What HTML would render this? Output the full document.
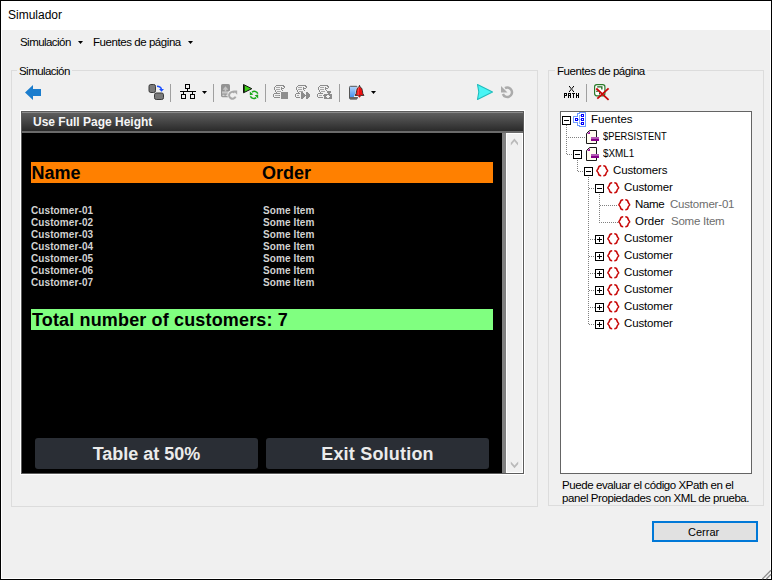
<!DOCTYPE html>
<html><head><meta charset="utf-8">
<style>
*{box-sizing:border-box;margin:0;padding:0}
html,body{width:772px;height:580px;overflow:hidden;background:#fff}
body{position:relative;font-family:"Liberation Sans",sans-serif;font-size:11px;color:#000}
.a{position:absolute;white-space:nowrap;line-height:1}
#win{position:absolute;left:0;top:0;width:772px;height:580px;border:1px solid #000;background:#fff}
#cl{position:absolute;left:2px;top:30px;width:768px;height:548px;background:#f0f0f0}
.gb{position:absolute;border:1px solid #dcdcdc}
.lbl{background:#f0f0f0;padding:0 2px}
.sep{position:absolute;width:1px;background:#a0a0a0}
.tb{position:absolute}
.blk{color:#d2d2d2;font-weight:bold;font-size:10px;letter-spacing:0.1px}
.big{font-weight:bold;font-size:18px}
.btn{position:absolute;top:438px;height:31px;background:#2a2e35;border-radius:3px;color:#ebebeb;font-weight:bold;font-size:18px;text-align:center;line-height:31px;padding-top:1px}
.tt{font-size:11.5px;letter-spacing:-0.15px}
.gv{color:#6d6d6d}
</style></head>
<body>
<div id="win"></div>
<div id="cl"></div>

<!-- title -->
<div class="a" style="left:8px;top:9px;font-size:12px">Simulador</div>

<!-- menu -->
<div class="a" style="left:20px;top:37px;font-size:11.5px;letter-spacing:-0.55px">Simulación</div>
<svg class="a" style="left:78px;top:41px" width="5" height="3"><path d="M0 0H5L2.5 3Z" fill="#000"/></svg>
<div class="a" style="left:93px;top:37px;font-size:11.5px;letter-spacing:-0.44px">Fuentes de página</div>
<svg class="a" style="left:188px;top:41px" width="5" height="3"><path d="M0 0H5L2.5 3Z" fill="#000"/></svg>

<!-- group boxes -->
<div class="gb" style="left:11px;top:70px;width:527px;height:437px"></div>
<div class="gb" style="left:548px;top:70px;width:216px;height:436px"></div>
<div class="a lbl" style="left:17px;top:66px;font-size:11.5px;letter-spacing:-0.55px">Simulación</div>
<div class="a lbl" style="left:555px;top:66px;font-size:11.5px;letter-spacing:-0.44px">Fuentes de página</div>

<!-- toolbar left -->
<svg class="a" style="left:0;top:0" width="772" height="110">
  <!-- back arrow -->
  <path d="M25 92.5L33 85V89H41V96H33V100Z" fill="#1b7dcd"/>
  <!-- swap icon -->
  <rect x="149" y="84.5" width="6.5" height="8" rx="1.8" fill="#7a7a7a" stroke="#3a3a3a"/>
  <rect x="154.5" y="93" width="9" height="6.5" rx="1.8" fill="#7a7a7a" stroke="#3a3a3a"/>
  <path d="M157 86.3Q160.8 86.3 161.5 89.5" fill="none" stroke="#1a4fff" stroke-width="1.4"/>
  <path d="M159 89H164L161.5 91.8Z" fill="#1a4fff"/>
  <!-- separators -->
  <rect x="170" y="84" width="1" height="18" fill="#a0a0a0"/>
  <rect x="213" y="84" width="1" height="18" fill="#a0a0a0"/>
  <rect x="265" y="84" width="1" height="18" fill="#a0a0a0"/>
  <rect x="339" y="84" width="1" height="18" fill="#a0a0a0"/>
  <!-- hierarchy -->
  <g fill="none" stroke="#000" shape-rendering="crispEdges">
    <rect x="185.5" y="84.5" width="4" height="4"/>
    <rect x="181.5" y="94.5" width="4" height="4"/>
    <rect x="190.5" y="94.5" width="4" height="4"/>
    <path d="M187.5 88.5V91.5M180 91.5H196M183.5 91.5V94.5M192.5 91.5V94.5"/>
  </g>
  <path d="M202 91H207L204.5 94Z" fill="#000"/>
  <!-- gray doc refresh -->
  <rect x="221" y="84" width="9" height="13.2" rx="1.6" fill="#939393"/>
  <path d="M222.6 89.8L225.5 86.2L228.4 89.8H226.3V91.4H224.7V89.8Z" fill="#c2c2c2"/>
  <rect x="222" y="91.4" width="7" height="2.2" fill="#c6c6c6"/>
  <rect x="222.4" y="94.6" width="2.2" height="1.5" fill="#d4d4d4"/><rect x="225.6" y="94.6" width="2.2" height="1.5" fill="#d4d4d4"/>
  <circle cx="232.3" cy="95" r="5" fill="#f0f0f0"/>
  <path d="M235.6 96.6A3.4 3.4 0 1 1 234.6 92.6" fill="none" stroke="#a9a9a9" stroke-width="2"/>
  <path d="M233 90.6H237.2V94.8Z" fill="#a9a9a9"/>
  <!-- green play sync -->
  <path d="M243.5 84.5L251.8 88.7L243.5 92.8Z" fill="#3cd016" stroke="#111" stroke-width="1" stroke-linejoin="round"/>
  <path d="M244 85.5V92" stroke="#111" stroke-width="1.4"/>
  <g fill="none" stroke="#18a818" stroke-width="1.5">
    <path d="M257.8 93.6A3.7 3.7 0 0 0 252 92.2"/>
    <path d="M250.4 96.2A3.7 3.7 0 0 0 256.2 97.6"/>
  </g>
  <path d="M249.8 91.4L253.4 94.6L249.8 95.2Z" fill="#18a818"/>
  <path d="M258.2 98.4L254.6 95.2L258.2 94.6Z" fill="#18a818"/>
  <!-- scroll icons -->
  <g fill="#8c8c8c" shape-rendering="crispEdges"><rect x="276" y="85" width="8" height="1"/><rect x="275" y="86" width="1" height="1"/><rect x="283" y="86" width="2" height="1"/><rect x="274" y="87" width="1" height="1"/><rect x="281" y="87" width="1" height="1"/><rect x="284" y="87" width="1" height="1"/><rect x="274" y="88" width="1" height="1"/><rect x="281" y="88" width="3" height="1"/><rect x="274" y="89" width="1" height="1"/><rect x="281" y="89" width="1" height="1"/><rect x="275" y="90" width="1" height="1"/><rect x="282" y="90" width="1" height="1"/><rect x="275" y="91" width="1" height="1"/><rect x="276" y="92" width="1" height="1"/><rect x="274" y="93" width="6" height="1"/><rect x="273" y="94" width="1" height="1"/><rect x="273" y="95" width="1" height="1"/><rect x="279" y="95" width="1" height="1"/><rect x="273" y="96" width="1" height="1"/><rect x="274" y="97" width="6" height="1"/></g>
  <g fill="#a8a8a8" shape-rendering="crispEdges"><rect x="276" y="87" width="4" height="1"/><rect x="276" y="89" width="4" height="1"/><rect x="277" y="91" width="4" height="1"/><rect x="275" y="95" width="4" height="1"/></g>
  <g fill="#8e8e8e" shape-rendering="crispEdges"><rect x="281" y="92" width="7" height="1"/><rect x="281" y="93" width="7" height="1"/><rect x="281" y="94" width="7" height="1"/><rect x="281" y="95" width="7" height="1"/><rect x="281" y="96" width="7" height="1"/><rect x="281" y="97" width="7" height="1"/><rect x="281" y="98" width="7" height="1"/></g>
  <g fill="#8c8c8c" shape-rendering="crispEdges"><rect x="298" y="85" width="8" height="1"/><rect x="297" y="86" width="1" height="1"/><rect x="305" y="86" width="2" height="1"/><rect x="296" y="87" width="1" height="1"/><rect x="303" y="87" width="1" height="1"/><rect x="306" y="87" width="1" height="1"/><rect x="296" y="88" width="1" height="1"/><rect x="303" y="88" width="3" height="1"/><rect x="296" y="89" width="1" height="1"/><rect x="303" y="89" width="1" height="1"/><rect x="297" y="90" width="1" height="1"/><rect x="304" y="90" width="1" height="1"/><rect x="297" y="91" width="1" height="1"/><rect x="298" y="92" width="1" height="1"/><rect x="296" y="93" width="4" height="1"/><rect x="295" y="94" width="1" height="1"/><rect x="295" y="95" width="1" height="1"/><rect x="295" y="96" width="1" height="1"/><rect x="296" y="97" width="4" height="1"/></g>
  <g fill="#a8a8a8" shape-rendering="crispEdges"><rect x="298" y="87" width="4" height="1"/><rect x="298" y="89" width="4" height="1"/><rect x="299" y="91" width="4" height="1"/><rect x="297" y="95" width="2" height="1"/></g>
  <g fill="#8c8c8c" shape-rendering="crispEdges"><rect x="301" y="92" width="2" height="1"/><rect x="306" y="92" width="2" height="1"/><rect x="301" y="93" width="3" height="1"/><rect x="306" y="93" width="3" height="1"/><rect x="301" y="94" width="4" height="1"/><rect x="306" y="94" width="4" height="1"/><rect x="301" y="95" width="9" height="1"/><rect x="301" y="96" width="4" height="1"/><rect x="306" y="96" width="4" height="1"/><rect x="301" y="97" width="3" height="1"/><rect x="306" y="97" width="3" height="1"/><rect x="301" y="98" width="2" height="1"/><rect x="306" y="98" width="2" height="1"/></g>
  <g fill="#8c8c8c" shape-rendering="crispEdges"><rect x="320" y="85" width="8" height="1"/><rect x="319" y="86" width="1" height="1"/><rect x="327" y="86" width="2" height="1"/><rect x="318" y="87" width="1" height="1"/><rect x="325" y="87" width="1" height="1"/><rect x="328" y="87" width="1" height="1"/><rect x="318" y="88" width="1" height="1"/><rect x="325" y="88" width="3" height="1"/><rect x="318" y="89" width="1" height="1"/><rect x="325" y="89" width="1" height="1"/><rect x="319" y="90" width="1" height="1"/><rect x="326" y="90" width="1" height="1"/><rect x="319" y="91" width="1" height="1"/><rect x="320" y="92" width="1" height="1"/><rect x="318" y="93" width="5" height="1"/><rect x="317" y="94" width="1" height="1"/><rect x="317" y="95" width="1" height="1"/><rect x="323" y="95" width="1" height="1"/><rect x="317" y="96" width="1" height="1"/><rect x="318" y="97" width="5" height="1"/></g>
  <g fill="#a8a8a8" shape-rendering="crispEdges"><rect x="320" y="87" width="4" height="1"/><rect x="320" y="89" width="4" height="1"/><rect x="321" y="91" width="4" height="1"/><rect x="319" y="95" width="3" height="1"/></g>
  <g fill="#8c8c8c" shape-rendering="crispEdges"><rect x="327" y="91" width="4" height="1"/><rect x="327" y="92" width="4" height="1"/><rect x="328" y="93" width="2" height="1"/><rect x="324" y="94" width="8" height="1"/><rect x="324" y="95" width="3" height="1"/><rect x="329" y="95" width="3" height="1"/><rect x="324" y="96" width="2" height="1"/><rect x="330" y="96" width="2" height="1"/><rect x="324" y="97" width="3" height="1"/><rect x="329" y="97" width="3" height="1"/><rect x="324" y="98" width="8" height="1"/></g>
  <!-- phone bell -->
  <defs><linearGradient id="ph" x1="0" y1="0" x2="0" y2="1"><stop offset="0" stop-color="#b4d6fb"/><stop offset="1" stop-color="#3586ee"/></linearGradient></defs>
  <rect x="349.5" y="86.3" width="7.8" height="12.7" rx="1" fill="url(#ph)" stroke="#555"/>
  <rect x="350" y="97" width="7" height="2.3" fill="#666"/>
  <path d="M354 95.8Q355.6 94.6 355.6 90.5Q355.8 87 358.8 86L359.5 84L360.2 86Q363.2 87 363.4 90.5Q363.4 94.6 365 95.8V97H354Z" fill="#f4f4f4"/>
  <path d="M355 95.4Q356.5 94.4 356.6 90.6Q356.8 87.6 359 86.9L359.5 85.3L360 86.9Q362.2 87.6 362.4 90.6Q362.5 94.4 364 95.4Z" fill="#f01010" stroke="#2a2a2a" stroke-width="0.9" stroke-linejoin="round"/>
  <path d="M358.2 95.6Q358 86 359.4 87.6" fill="none" stroke="#ff7070" stroke-width="0.7"/>
  <path d="M357.8 95.8H361.2L359.5 97.8Z" fill="#d00c0c"/>
  <path d="M371 91H376L373.5 94Z" fill="#000"/>
  <!-- cyan play -->
  <path d="M477.5 84.5L492.5 92L477.5 99.5L478.8 92Z" fill="#48f5f5" stroke="#20bcbc" stroke-width="1.1" stroke-linejoin="round"/>
  <!-- reload gray -->
  <path d="M505 88.2A4.7 4.7 0 1 1 502.9 94" fill="none" stroke="#ababab" stroke-width="2.5"/>
  <path d="M501 86V92.5H507.5Z" fill="#ababab"/>
  <!-- xpath -->
  <g fill="#000"><rect x="569" y="86.0" width="1" height="1.2"/><rect x="573" y="86.0" width="1" height="1.2"/><rect x="570" y="87.2" width="1" height="1.2"/><rect x="572" y="87.2" width="1" height="1.2"/><rect x="571" y="88.4" width="1" height="1.2"/><rect x="570" y="89.6" width="1" height="1.2"/><rect x="572" y="89.6" width="1" height="1.2"/><rect x="569" y="90.8" width="1" height="1.2"/><rect x="573" y="90.8" width="1" height="1.2"/></g>
  <g fill="#000" shape-rendering="crispEdges"><rect x="564" y="93" width="1" height="1"/><rect x="565" y="93" width="1" height="1"/><rect x="566" y="93" width="1" height="1"/><rect x="564" y="94" width="1" height="1"/><rect x="566" y="94" width="1" height="1"/><rect x="564" y="95" width="1" height="1"/><rect x="565" y="95" width="1" height="1"/><rect x="566" y="95" width="1" height="1"/><rect x="564" y="96" width="1" height="1"/><rect x="564" y="97" width="1" height="1"/><rect x="568" y="93" width="1" height="1"/><rect x="569" y="93" width="1" height="1"/><rect x="570" y="93" width="1" height="1"/><rect x="568" y="94" width="1" height="1"/><rect x="570" y="94" width="1" height="1"/><rect x="568" y="95" width="1" height="1"/><rect x="569" y="95" width="1" height="1"/><rect x="570" y="95" width="1" height="1"/><rect x="568" y="96" width="1" height="1"/><rect x="570" y="96" width="1" height="1"/><rect x="568" y="97" width="1" height="1"/><rect x="570" y="97" width="1" height="1"/><rect x="572" y="93" width="1" height="1"/><rect x="573" y="93" width="1" height="1"/><rect x="574" y="93" width="1" height="1"/><rect x="573" y="94" width="1" height="1"/><rect x="573" y="95" width="1" height="1"/><rect x="573" y="96" width="1" height="1"/><rect x="573" y="97" width="1" height="1"/><rect x="576" y="93" width="1" height="1"/><rect x="578" y="93" width="1" height="1"/><rect x="576" y="94" width="1" height="1"/><rect x="578" y="94" width="1" height="1"/><rect x="576" y="95" width="1" height="1"/><rect x="577" y="95" width="1" height="1"/><rect x="578" y="95" width="1" height="1"/><rect x="576" y="96" width="1" height="1"/><rect x="578" y="96" width="1" height="1"/><rect x="576" y="97" width="1" height="1"/><rect x="578" y="97" width="1" height="1"/></g>
  <rect x="586" y="84" width="1" height="18" fill="#a0a0a0"/>
  <rect x="594.6" y="84.6" width="10.3" height="11.2" rx="2.2" fill="#fff" stroke="#2a7a2a" stroke-width="1.2"/>
  <path d="M597.2 86.2H602.5V89.5H601.2V87.4H597.2Z" fill="#1f6a1f"/>
  <path d="M596 90.8H598.2V91.8H596ZM599 92.5H600V94.5H599Z" fill="#1f6a1f"/>
  <path d="M596.3 88.5L608.6 99.8M608.6 88.4L597.3 98.6" stroke="#c80808" stroke-width="1.8"/>
</svg>

<!-- simulation panel -->
<div class="a" style="left:20px;top:110px;width:505px;height:365px;background:#fff"></div>
<div class="a" style="left:21px;top:111px;width:503px;height:363px;background:#5c5c5c"></div>
<div class="a" style="left:22px;top:112px;width:501px;height:1px;background:#8c8c8c"></div>
<div class="a" style="left:22px;top:113px;width:501px;height:18px;background:linear-gradient(#5e5e5e,#2a2a2a)"></div>
<div class="a" style="left:22px;top:131px;width:501px;height:2px;background:#6a6a6a"></div>
<div class="a" style="left:22px;top:133px;width:480px;height:340px;background:#000"></div>
<div class="a" style="left:502px;top:133px;width:4px;height:340px;background:#808080"></div>
<div class="a" style="left:506px;top:133px;width:17px;height:340px;background:#f0f0f0;border:1px solid #fff"></div>
<svg class="a" style="left:506px;top:133px" width="17" height="340">
  <path d="M4.8 9.8L8.4 5.6L12 9.8V12.4L8.4 8.3L4.8 12.4Z" fill="#bababa"/>
  <path d="M4.8 331L8.5 335.2L12.2 331V328.4L8.5 332.5L4.8 328.4Z" fill="#bababa"/>
</svg>
<div class="a" style="left:33px;top:116px;color:#f5f5f5;font-weight:bold;font-size:12px">Use Full Page Height</div>

<div class="a" style="left:31px;top:162px;width:462px;height:21px;background:#ff8000"></div>
<div class="a big" style="left:31.5px;top:164px;color:#000">Name</div>
<div class="a big" style="left:262px;top:164px;color:#000">Order</div>

<div class="a blk" style="left:31px;top:205px;line-height:12px">Customer-01<br>Customer-02<br>Customer-03<br>Customer-04<br>Customer-05<br>Customer-06<br>Customer-07</div>
<div class="a blk" style="left:263px;top:205px;line-height:12px">Some Item<br>Some Item<br>Some Item<br>Some Item<br>Some Item<br>Some Item<br>Some Item</div>

<div class="a" style="left:31px;top:309px;width:462px;height:21px;background:#80ff80"></div>
<div class="a big" style="left:32px;top:311px;color:#000;letter-spacing:0.15px">Total number of customers: 7</div>

<div class="btn" style="left:35px;width:223px">Table at 50%</div>
<div class="btn" style="left:266px;width:223px;letter-spacing:0.2px">Exit Solution</div>

<!-- tree -->
<div class="a" style="left:560px;top:111px;width:192px;height:363px;background:#fff;border:1px solid #646464"></div>
<svg class="a" style="left:0;top:0" width="772" height="340">
  <g fill="#808080" shape-rendering="crispEdges"><rect x="566" y="125" width="1" height="1"/><rect x="566" y="127" width="1" height="1"/><rect x="566" y="129" width="1" height="1"/><rect x="566" y="131" width="1" height="1"/><rect x="566" y="133" width="1" height="1"/><rect x="566" y="135" width="1" height="1"/><rect x="566" y="137" width="1" height="1"/><rect x="566" y="139" width="1" height="1"/><rect x="566" y="141" width="1" height="1"/><rect x="566" y="143" width="1" height="1"/><rect x="566" y="145" width="1" height="1"/><rect x="566" y="147" width="1" height="1"/><rect x="566" y="149" width="1" height="1"/><rect x="566" y="151" width="1" height="1"/><rect x="566" y="153" width="1" height="1"/><rect x="567" y="154" width="1" height="1"/><rect x="568" y="137" width="1" height="1"/><rect x="569" y="154" width="1" height="1"/><rect x="570" y="137" width="1" height="1"/><rect x="571" y="154" width="1" height="1"/><rect x="572" y="137" width="1" height="1"/><rect x="574" y="137" width="1" height="1"/><rect x="576" y="137" width="1" height="1"/><rect x="577" y="160" width="1" height="1"/><rect x="577" y="162" width="1" height="1"/><rect x="577" y="164" width="1" height="1"/><rect x="577" y="166" width="1" height="1"/><rect x="577" y="168" width="1" height="1"/><rect x="577" y="170" width="1" height="1"/><rect x="578" y="137" width="1" height="1"/><rect x="578" y="171" width="1" height="1"/><rect x="580" y="137" width="1" height="1"/><rect x="580" y="171" width="1" height="1"/><rect x="582" y="137" width="1" height="1"/><rect x="582" y="171" width="1" height="1"/><rect x="584" y="137" width="1" height="1"/><rect x="584" y="171" width="1" height="1"/><rect x="588" y="177" width="1" height="1"/><rect x="588" y="179" width="1" height="1"/><rect x="588" y="181" width="1" height="1"/><rect x="588" y="183" width="1" height="1"/><rect x="588" y="185" width="1" height="1"/><rect x="588" y="187" width="1" height="1"/><rect x="588" y="189" width="1" height="1"/><rect x="588" y="191" width="1" height="1"/><rect x="588" y="193" width="1" height="1"/><rect x="588" y="195" width="1" height="1"/><rect x="588" y="197" width="1" height="1"/><rect x="588" y="199" width="1" height="1"/><rect x="588" y="201" width="1" height="1"/><rect x="588" y="203" width="1" height="1"/><rect x="588" y="205" width="1" height="1"/><rect x="588" y="207" width="1" height="1"/><rect x="588" y="209" width="1" height="1"/><rect x="588" y="211" width="1" height="1"/><rect x="588" y="213" width="1" height="1"/><rect x="588" y="215" width="1" height="1"/><rect x="588" y="217" width="1" height="1"/><rect x="588" y="219" width="1" height="1"/><rect x="588" y="221" width="1" height="1"/><rect x="588" y="223" width="1" height="1"/><rect x="588" y="225" width="1" height="1"/><rect x="588" y="227" width="1" height="1"/><rect x="588" y="229" width="1" height="1"/><rect x="588" y="231" width="1" height="1"/><rect x="588" y="233" width="1" height="1"/><rect x="588" y="235" width="1" height="1"/><rect x="588" y="237" width="1" height="1"/><rect x="588" y="239" width="1" height="1"/><rect x="588" y="241" width="1" height="1"/><rect x="588" y="243" width="1" height="1"/><rect x="588" y="245" width="1" height="1"/><rect x="588" y="247" width="1" height="1"/><rect x="588" y="249" width="1" height="1"/><rect x="588" y="251" width="1" height="1"/><rect x="588" y="253" width="1" height="1"/><rect x="588" y="255" width="1" height="1"/><rect x="588" y="257" width="1" height="1"/><rect x="588" y="259" width="1" height="1"/><rect x="588" y="261" width="1" height="1"/><rect x="588" y="263" width="1" height="1"/><rect x="588" y="265" width="1" height="1"/><rect x="588" y="267" width="1" height="1"/><rect x="588" y="269" width="1" height="1"/><rect x="588" y="271" width="1" height="1"/><rect x="588" y="273" width="1" height="1"/><rect x="588" y="275" width="1" height="1"/><rect x="588" y="277" width="1" height="1"/><rect x="588" y="279" width="1" height="1"/><rect x="588" y="281" width="1" height="1"/><rect x="588" y="283" width="1" height="1"/><rect x="588" y="285" width="1" height="1"/><rect x="588" y="287" width="1" height="1"/><rect x="588" y="289" width="1" height="1"/><rect x="588" y="291" width="1" height="1"/><rect x="588" y="293" width="1" height="1"/><rect x="588" y="295" width="1" height="1"/><rect x="588" y="297" width="1" height="1"/><rect x="588" y="299" width="1" height="1"/><rect x="588" y="301" width="1" height="1"/><rect x="588" y="303" width="1" height="1"/><rect x="588" y="305" width="1" height="1"/><rect x="588" y="307" width="1" height="1"/><rect x="588" y="309" width="1" height="1"/><rect x="588" y="311" width="1" height="1"/><rect x="588" y="313" width="1" height="1"/><rect x="588" y="315" width="1" height="1"/><rect x="588" y="317" width="1" height="1"/><rect x="588" y="319" width="1" height="1"/><rect x="588" y="321" width="1" height="1"/><rect x="588" y="323" width="1" height="1"/><rect x="589" y="188" width="1" height="1"/><rect x="589" y="256" width="1" height="1"/><rect x="589" y="290" width="1" height="1"/><rect x="589" y="324" width="1" height="1"/><rect x="590" y="239" width="1" height="1"/><rect x="590" y="273" width="1" height="1"/><rect x="590" y="307" width="1" height="1"/><rect x="591" y="188" width="1" height="1"/><rect x="591" y="256" width="1" height="1"/><rect x="591" y="290" width="1" height="1"/><rect x="591" y="324" width="1" height="1"/><rect x="592" y="239" width="1" height="1"/><rect x="592" y="273" width="1" height="1"/><rect x="592" y="307" width="1" height="1"/><rect x="593" y="188" width="1" height="1"/><rect x="593" y="256" width="1" height="1"/><rect x="593" y="290" width="1" height="1"/><rect x="593" y="324" width="1" height="1"/><rect x="594" y="239" width="1" height="1"/><rect x="594" y="273" width="1" height="1"/><rect x="594" y="307" width="1" height="1"/><rect x="599" y="194" width="1" height="1"/><rect x="599" y="196" width="1" height="1"/><rect x="599" y="198" width="1" height="1"/><rect x="599" y="200" width="1" height="1"/><rect x="599" y="202" width="1" height="1"/><rect x="599" y="204" width="1" height="1"/><rect x="599" y="206" width="1" height="1"/><rect x="599" y="208" width="1" height="1"/><rect x="599" y="210" width="1" height="1"/><rect x="599" y="212" width="1" height="1"/><rect x="599" y="214" width="1" height="1"/><rect x="599" y="216" width="1" height="1"/><rect x="599" y="218" width="1" height="1"/><rect x="599" y="220" width="1" height="1"/><rect x="599" y="222" width="1" height="1"/><rect x="600" y="205" width="1" height="1"/><rect x="601" y="222" width="1" height="1"/><rect x="602" y="205" width="1" height="1"/><rect x="603" y="222" width="1" height="1"/><rect x="604" y="205" width="1" height="1"/><rect x="605" y="222" width="1" height="1"/><rect x="606" y="205" width="1" height="1"/><rect x="607" y="222" width="1" height="1"/><rect x="608" y="205" width="1" height="1"/><rect x="609" y="222" width="1" height="1"/><rect x="610" y="205" width="1" height="1"/><rect x="611" y="222" width="1" height="1"/><rect x="612" y="205" width="1" height="1"/><rect x="613" y="222" width="1" height="1"/><rect x="614" y="205" width="1" height="1"/><rect x="615" y="222" width="1" height="1"/><rect x="616" y="205" width="1" height="1"/><rect x="617" y="222" width="1" height="1"/></g>
  <g stroke="#000" fill="#fff" shape-rendering="crispEdges">
    <rect x="562.5" y="116.5" width="8" height="8"/>
    <rect x="573.5" y="150.5" width="8" height="8"/>
    <rect x="584.5" y="167.5" width="8" height="8"/>
    <rect x="595.5" y="184.5" width="8" height="8"/>
    <rect x="595.5" y="235.5" width="8" height="8"/>
    <rect x="595.5" y="252.5" width="8" height="8"/>
    <rect x="595.5" y="269.5" width="8" height="8"/>
    <rect x="595.5" y="286.5" width="8" height="8"/>
    <rect x="595.5" y="303.5" width="8" height="8"/>
    <rect x="595.5" y="320.5" width="8" height="8"/>
  </g>
  <g stroke="#000" shape-rendering="crispEdges">
    <path d="M564 120.5H569M575 154.5H580M586 171.5H591M597 188.5H602"/>
    <path d="M597 239.5H602M599.5 237V242M597 256.5H602M599.5 254V259M597 273.5H602M599.5 271V276M597 290.5H602M599.5 288V293M597 307.5H602M599.5 305V310M597 324.5H602M599.5 322V327"/>
  </g>
  <!-- Fuentes icon -->
  <path d="M579.5 112.5V113.5H577.5V116.5H573.5V122.5H577.5V125.5H579.5V126.5H585.5V112.5Z" fill="#fff" stroke="#6e9cff" shape-rendering="crispEdges"/>
  <path d="M581 115.5H579.5V123.5H581M578 119.5H581" fill="none" stroke="#8fb4ff" shape-rendering="crispEdges"/>
  <g fill="#fff" stroke="#0000ff" shape-rendering="crispEdges">
    <rect x="581.5" y="114.5" width="2" height="2"/>
    <rect x="581.5" y="118.5" width="2" height="2"/>
    <rect x="581.5" y="122.5" width="2" height="2"/>
    <rect x="575.5" y="118.5" width="2" height="2"/>
  </g>
  <!-- doc icons -->
  <g>
    <path d="M589.5 130.5H596.5V143.5H586.5V133.5Z" fill="#fffdf0" stroke="#1a1a1a"/>
    <path d="M587 134L590 131V134Z" fill="#9a1a9a"/>
    <rect x="591" y="137" width="8" height="2" fill="#b45ab4"/>
    <rect x="591" y="139" width="8" height="2" fill="#860086"/>
  </g>
  <g transform="translate(0 17)">
    <path d="M589.5 130.5H596.5V143.5H586.5V133.5Z" fill="#fffdf0" stroke="#1a1a1a"/>
    <path d="M587 134L590 131V134Z" fill="#9a1a9a"/>
    <rect x="591" y="137" width="8" height="2" fill="#b45ab4"/>
    <rect x="591" y="139" width="8" height="2" fill="#860086"/>
  </g>
  <!-- braces -->
  <g fill="none" stroke="#c80808" stroke-width="1.5">
    <path d="M601.2 165.7Q598.6 165.7 598.4 168.2L597.6 169.6Q597.2 170.7 596.2 170.7Q597.2 170.7 597.6 171.8L598.4 173.2Q598.6 175.7 601.2 175.7"/>
    <path d="M603.3 165.7Q605.9 165.7 606.1 168.2L606.9 169.6Q607.3 170.7 608.3 170.7Q607.3 170.7 606.9 171.8L606.1 173.2Q605.9 175.7 603.3 175.7"/>
  </g>
  <g fill="none" stroke="#c80808" stroke-width="1.5" transform="translate(11 17)">
    <path d="M601.2 165.7Q598.6 165.7 598.4 168.2L597.6 169.6Q597.2 170.7 596.2 170.7Q597.2 170.7 597.6 171.8L598.4 173.2Q598.6 175.7 601.2 175.7"/>
    <path d="M603.3 165.7Q605.9 165.7 606.1 168.2L606.9 169.6Q607.3 170.7 608.3 170.7Q607.3 170.7 606.9 171.8L606.1 173.2Q605.9 175.7 603.3 175.7"/>
  </g>
  <g fill="none" stroke="#c80808" stroke-width="1.5" transform="translate(22 34)">
    <path d="M601.2 165.7Q598.6 165.7 598.4 168.2L597.6 169.6Q597.2 170.7 596.2 170.7Q597.2 170.7 597.6 171.8L598.4 173.2Q598.6 175.7 601.2 175.7"/>
    <path d="M603.3 165.7Q605.9 165.7 606.1 168.2L606.9 169.6Q607.3 170.7 608.3 170.7Q607.3 170.7 606.9 171.8L606.1 173.2Q605.9 175.7 603.3 175.7"/>
  </g>
  <g fill="none" stroke="#c80808" stroke-width="1.5" transform="translate(22 51)">
    <path d="M601.2 165.7Q598.6 165.7 598.4 168.2L597.6 169.6Q597.2 170.7 596.2 170.7Q597.2 170.7 597.6 171.8L598.4 173.2Q598.6 175.7 601.2 175.7"/>
    <path d="M603.3 165.7Q605.9 165.7 606.1 168.2L606.9 169.6Q607.3 170.7 608.3 170.7Q607.3 170.7 606.9 171.8L606.1 173.2Q605.9 175.7 603.3 175.7"/>
  </g>
  <g fill="none" stroke="#c80808" stroke-width="1.5" transform="translate(11 68)">
    <path d="M601.2 165.7Q598.6 165.7 598.4 168.2L597.6 169.6Q597.2 170.7 596.2 170.7Q597.2 170.7 597.6 171.8L598.4 173.2Q598.6 175.7 601.2 175.7"/>
    <path d="M603.3 165.7Q605.9 165.7 606.1 168.2L606.9 169.6Q607.3 170.7 608.3 170.7Q607.3 170.7 606.9 171.8L606.1 173.2Q605.9 175.7 603.3 175.7"/>
  </g>
  <g fill="none" stroke="#c80808" stroke-width="1.5" transform="translate(11 85)">
    <path d="M601.2 165.7Q598.6 165.7 598.4 168.2L597.6 169.6Q597.2 170.7 596.2 170.7Q597.2 170.7 597.6 171.8L598.4 173.2Q598.6 175.7 601.2 175.7"/>
    <path d="M603.3 165.7Q605.9 165.7 606.1 168.2L606.9 169.6Q607.3 170.7 608.3 170.7Q607.3 170.7 606.9 171.8L606.1 173.2Q605.9 175.7 603.3 175.7"/>
  </g>
  <g fill="none" stroke="#c80808" stroke-width="1.5" transform="translate(11 102)">
    <path d="M601.2 165.7Q598.6 165.7 598.4 168.2L597.6 169.6Q597.2 170.7 596.2 170.7Q597.2 170.7 597.6 171.8L598.4 173.2Q598.6 175.7 601.2 175.7"/>
    <path d="M603.3 165.7Q605.9 165.7 606.1 168.2L606.9 169.6Q607.3 170.7 608.3 170.7Q607.3 170.7 606.9 171.8L606.1 173.2Q605.9 175.7 603.3 175.7"/>
  </g>
  <g fill="none" stroke="#c80808" stroke-width="1.5" transform="translate(11 119)">
    <path d="M601.2 165.7Q598.6 165.7 598.4 168.2L597.6 169.6Q597.2 170.7 596.2 170.7Q597.2 170.7 597.6 171.8L598.4 173.2Q598.6 175.7 601.2 175.7"/>
    <path d="M603.3 165.7Q605.9 165.7 606.1 168.2L606.9 169.6Q607.3 170.7 608.3 170.7Q607.3 170.7 606.9 171.8L606.1 173.2Q605.9 175.7 603.3 175.7"/>
  </g>
  <g fill="none" stroke="#c80808" stroke-width="1.5" transform="translate(11 136)">
    <path d="M601.2 165.7Q598.6 165.7 598.4 168.2L597.6 169.6Q597.2 170.7 596.2 170.7Q597.2 170.7 597.6 171.8L598.4 173.2Q598.6 175.7 601.2 175.7"/>
    <path d="M603.3 165.7Q605.9 165.7 606.1 168.2L606.9 169.6Q607.3 170.7 608.3 170.7Q607.3 170.7 606.9 171.8L606.1 173.2Q605.9 175.7 603.3 175.7"/>
  </g>
  <g fill="none" stroke="#c80808" stroke-width="1.5" transform="translate(11 153)">
    <path d="M601.2 165.7Q598.6 165.7 598.4 168.2L597.6 169.6Q597.2 170.7 596.2 170.7Q597.2 170.7 597.6 171.8L598.4 173.2Q598.6 175.7 601.2 175.7"/>
    <path d="M603.3 165.7Q605.9 165.7 606.1 168.2L606.9 169.6Q607.3 170.7 608.3 170.7Q607.3 170.7 606.9 171.8L606.1 173.2Q605.9 175.7 603.3 175.7"/>
  </g>
</svg>
<div class="a tt" style="left:591px;top:113px;line-height:12px;letter-spacing:0">Fuentes</div>
<div class="a tt" style="left:603px;top:130px;line-height:12px;transform:scaleX(.81);transform-origin:0 0;letter-spacing:0">$PERSISTENT</div>
<div class="a tt" style="left:603px;top:147px;line-height:12px;transform:scaleX(.86);transform-origin:0 0;letter-spacing:0">$XML1</div>
<div class="a tt" style="left:613px;top:164px;line-height:12px">Customers</div>
<div class="a tt" style="left:624px;top:181px;line-height:12px">Customer</div>
<div class="a tt" style="left:635px;top:198px;line-height:12px"><span style="letter-spacing:-0.33px">Name</span><span class="gv" style="position:absolute;left:35px;letter-spacing:-0.2px">Customer-01</span></div>
<div class="a tt" style="left:635px;top:215px;line-height:12px"><span style="letter-spacing:0">Order</span><span class="gv" style="position:absolute;left:36px;letter-spacing:-0.25px">Some Item</span></div>
<div class="a tt" style="left:624px;top:232px;line-height:12px">Customer</div>
<div class="a tt" style="left:624px;top:249px;line-height:12px">Customer</div>
<div class="a tt" style="left:624px;top:266px;line-height:12px">Customer</div>
<div class="a tt" style="left:624px;top:283px;line-height:12px">Customer</div>
<div class="a tt" style="left:624px;top:300px;line-height:12px">Customer</div>
<div class="a tt" style="left:624px;top:317px;line-height:12px">Customer</div>

<div class="a" style="left:562px;top:479px;line-height:12px;font-size:11.5px;letter-spacing:-0.42px">Puede evaluar el código XPath en el</div>
<div class="a" style="left:562px;top:492px;line-height:12px;font-size:11.5px;letter-spacing:-0.42px">panel Propiedades con XML de prueba.</div>

<!-- close button -->
<div class="a" style="left:652px;top:521px;width:106px;height:21px;background:#e1e1e1;border:2px solid #0078d7"></div>
<div class="a" style="left:688px;top:527px">Cerrar</div>

<!-- grip -->
<svg class="a" style="left:756px;top:564px" width="16" height="16">
  <path d="M7 15L15 7M11 15L15 11" stroke="#fff" stroke-width="1"/>
  <path d="M6.3 15L15 6.3M10.3 15L15 10.3" stroke="#8c8c8c" stroke-width="1.3"/>
</svg>
</body></html>
